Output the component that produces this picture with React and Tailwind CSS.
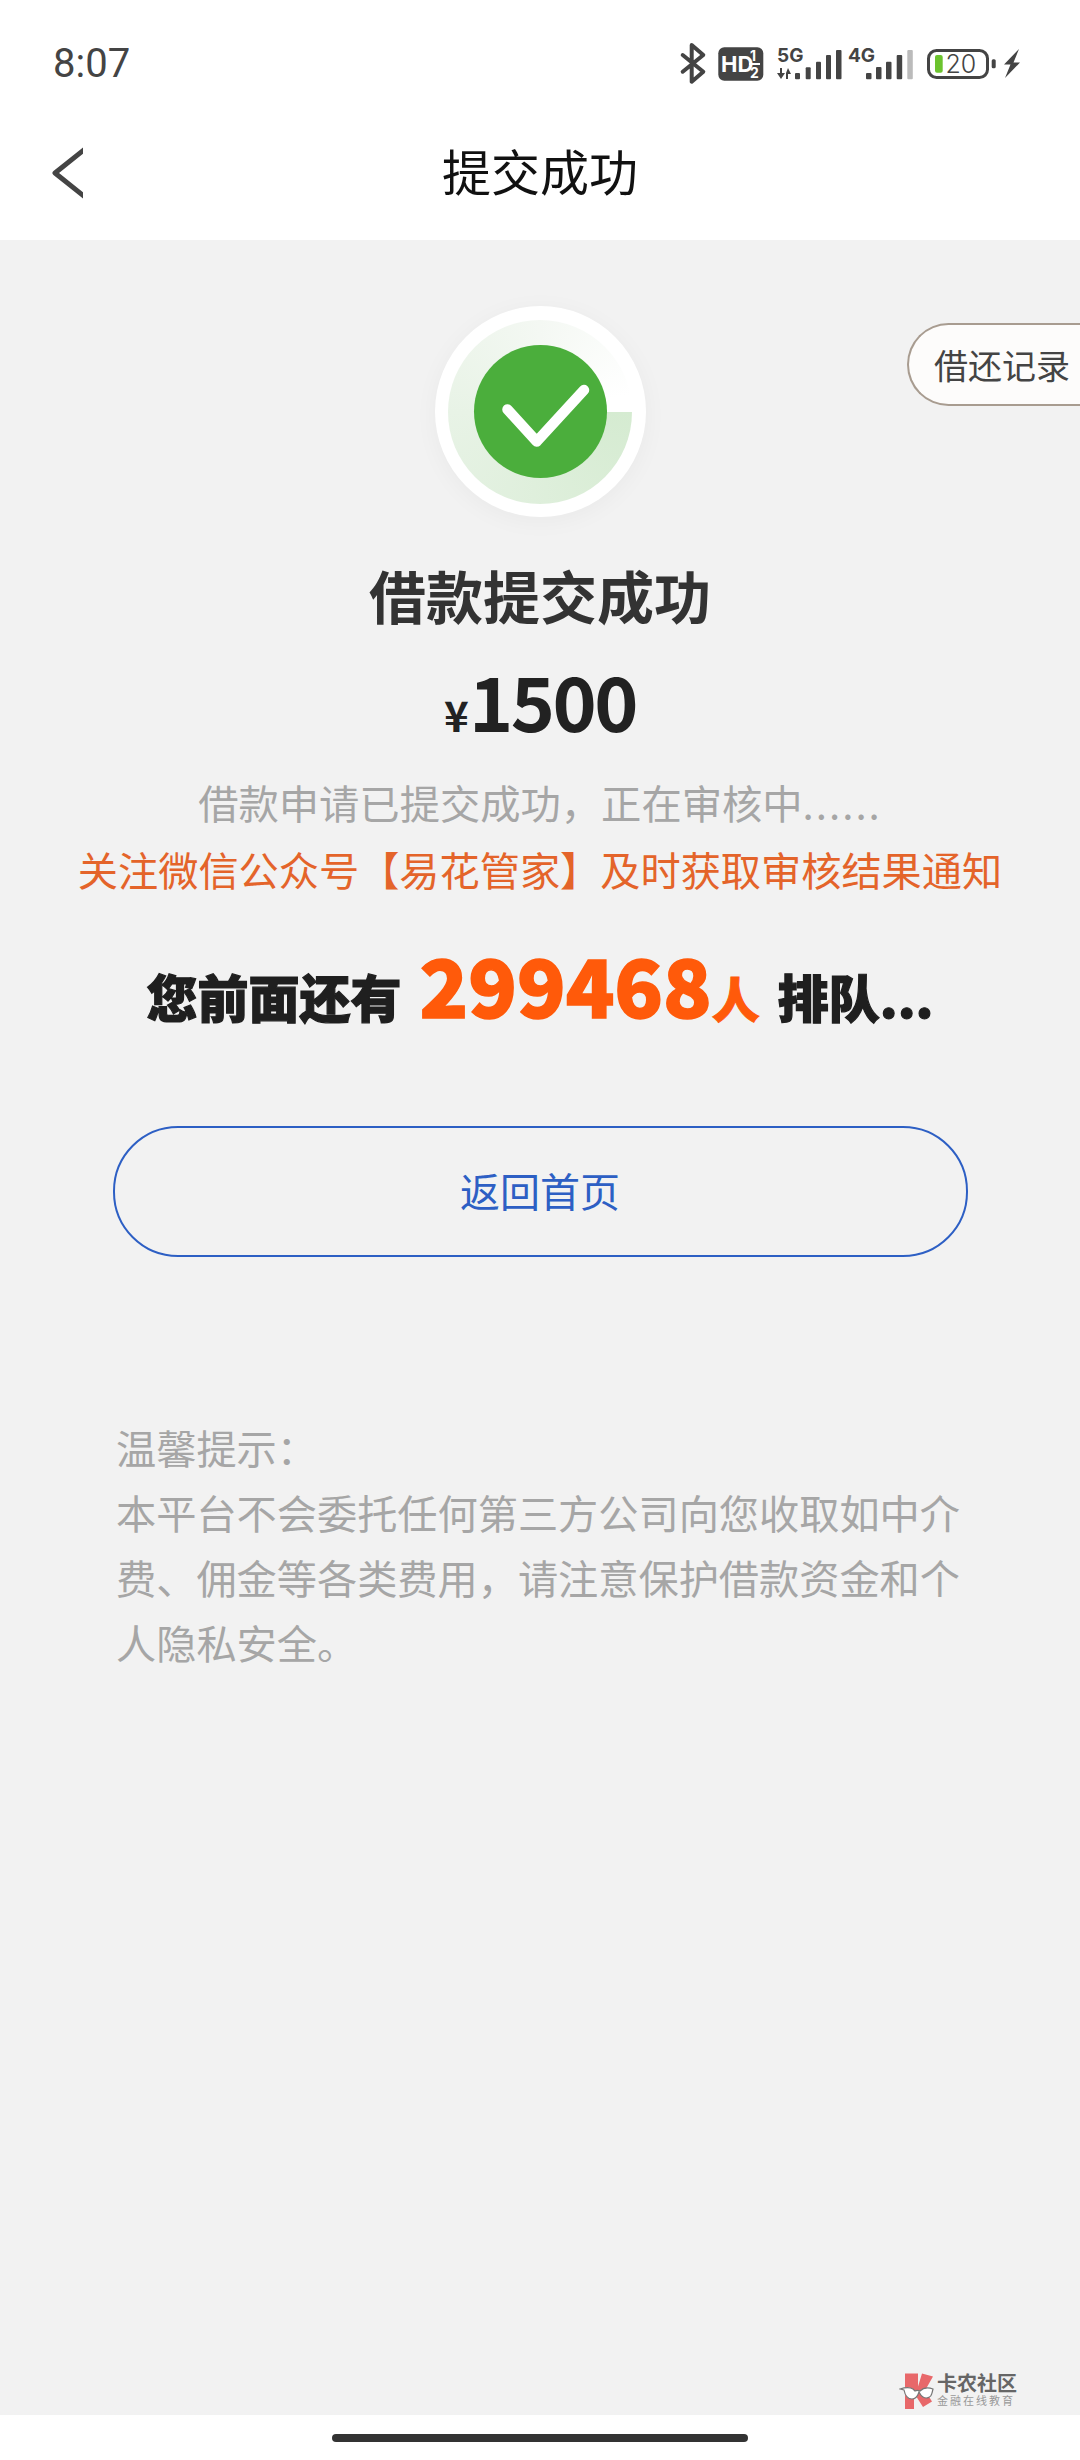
const cjk = { fontFamily: '"Noto Sans CJK SC", "Noto Sans", sans-serif' };

function StatusIcons() {
  return (
    <svg className="mt-[3px]" width="360" height="50" viewBox="0 0 360 50" fill="#444">
      <path d="M12.7 15 33.3 31.7 21.7 41.7V5L33.3 15 12.7 31.7" fill="none" stroke="#444" strokeWidth="4" strokeLinejoin="round" strokeLinecap="round" />
      <rect x="48.3" y="7.3" width="45" height="33.4" rx="6" />
      <text x="51" y="31.5" fill="#fff" fontSize="22" fontWeight="700" fontFamily="Inter">HD</text>
      <text x="80" y="21" fill="#fff" fontSize="14" fontWeight="700" fontFamily="Inter">1</text>
      <text x="80" y="38" fill="#fff" fontSize="14" fontWeight="700" fontFamily="Inter">2</text>
      <rect x="79" y="23" width="11" height="2" fill="#fff" />
      <text x="107" y="22" fontSize="19" fontWeight="700" fontFamily="Inter">5G</text>
      <path d="M107 33h3v-5h2v5h3l-4 6zM116 33l-0 6h2v-5h3l-3-6z" />
      <rect x="125" y="33" width="5" height="6.3" rx="1" />
      <rect x="135.7" y="27.3" width="5" height="12" rx="1" />
      <rect x="146" y="21.7" width="5" height="17.6" rx="1" />
      <rect x="156" y="15" width="5" height="24.3" rx="1" />
      <rect x="166" y="10" width="5.5" height="29.3" rx="1" />
      <text x="178" y="22" fontSize="19" fontWeight="700" fontFamily="Inter">4G</text>
      <rect x="196" y="33" width="5.5" height="6.3" rx="1" />
      <rect x="206" y="27" width="5.5" height="12.3" rx="1" />
      <rect x="216" y="21.7" width="5.5" height="17.6" rx="1" />
      <rect x="226.7" y="15" width="5.5" height="24.3" rx="1" />
      <rect x="237.3" y="10" width="5.5" height="29.3" rx="1" fill="#bbb" />
      <rect x="258.5" y="10.5" width="59" height="27" rx="8" fill="none" stroke="#444" strokeWidth="3" />
      <rect x="265" y="15" width="7.7" height="17.7" rx="2" fill="#6cc32e" />
      <text x="275.5" y="32.7" fontSize="25" fontFamily="Inter" fontWeight="300">20</text>
      <rect x="321.7" y="19.3" width="4" height="9" rx="1.5" />
      <path d="M349 9 334 24.5h6.5L335 38 350 22.5h-6.5z" />
    </svg>
  );
}

function SuccessIcon() {
  return (
    <div className="w-[211px] h-[211px] rounded-full bg-white flex items-center justify-center shadow-[0_4px_24px_rgba(0,0,0,0.04)]">
      <div className="w-[184px] h-[184px] rounded-full flex items-center justify-center bg-[conic-gradient(from_90deg,#d5ebd1,#e8f3e6_50%,#f4f8f3_75%,#ffffff_97%)]">
        <div className="w-[133px] h-[133px] rounded-full bg-[#4bae3c]">
          <svg width="133" height="133" viewBox="0 0 133 133" fill="none">
            <path d="M33.5 64.5 62.7 96.5 110 45" stroke="#fff" strokeWidth="10.5" strokeLinecap="round" strokeLinejoin="round" />
          </svg>
        </div>
      </div>
    </div>
  );
}

function Watermark() {
  return (
    <div className="absolute left-[899px] top-[2370px] flex items-center">
      <svg width="40" height="40" viewBox="0 0 40 40">
        <path d="M6 3.5h13v13L23 3.5l11 3-8 14 7 11-9 5.5-9-14v16H6z" fill="#e8686a" />
        <path d="M1 19c6-2 10-2 13 0l2 2c2-1 3-1 5 0 3-3 8-4 13-2l-1 4c-1 5-6 6-9 4-2-1-3-3-4-5-1 3-2 7-7 7-5 0-7-4-8-9z" fill="#fff" stroke="#777" strokeWidth="1.2" />
      </svg>
      <div className="ml-[-2px] flex flex-col" style={cjk}>
        <span className="text-[20px] leading-[20px] font-bold text-[#666]">卡农社区</span>
        <span className="text-[11px] leading-[14px] text-[#999] tracking-[2px]">金融在线教育</span>
      </div>
    </div>
  );
}

export default function App() {
  return (
    <div className="relative w-[1080px] h-[2460px] overflow-hidden bg-white flex flex-col" style={cjk}>
      <div className="h-[126px] flex items-center justify-between pl-[53px] pr-[50px] shrink-0">
        <span className="mt-[2px] text-[40px] text-[#444] font-['Roboto']">8:07</span>
        <StatusIcons />
      </div>
      <div className="h-[114px] shrink-0 flex items-center justify-center relative">
        <svg className="absolute left-[48px] top-[21px]" width="35" height="52" viewBox="0 0 35 52" fill="none">
          <path d="M37 2 7 26l30 24" stroke="#444" strokeWidth="5" strokeLinecap="round" strokeLinejoin="round" />
        </svg>
        <span className="text-[49px] text-[#111] -mt-[26px]">提交成功</span>
      </div>

      <div className="relative flex-1 bg-[#f2f2f2] flex flex-col items-center pt-[66px]">
        <div className="absolute right-0 top-[83px] w-[173px] h-[83px] rounded-l-[42px] border-2 border-r-0 border-[#a89c90] bg-[#fdfcfb] flex items-center pl-[25px] text-[34px] text-[#444]">
          借还记录
        </div>
        <SuccessIcon />
        <div className="mt-[37px] text-[57px] leading-[80px] font-bold text-[#333]">借款提交成功</div>
        <div className="mt-[21px] flex items-baseline text-[#222] font-bold leading-[90px]">
          <span className="text-[42px]">¥</span>
          <span className="text-[75px] tracking-[-2.5px]">1500</span>
        </div>
        <div className="mt-[13px] text-[40.3px] leading-[60px] text-[#a6a6a6]">借款申请已提交成功，正在审核中<span className="tracking-[2px]">......</span></div>
        <div className="mt-[7px] text-[40.2px] leading-[60px] text-[#e4642a]">关注微信公众号【易花管家】及时获取审核结果通知</div>
        <div className="mt-[34px] flex items-baseline text-[#1f1f1f] font-black leading-[100px]">
          <span className="text-[51px] [-webkit-text-stroke:1.2px_#1f1f1f]">您前面还有</span>
          <span className="ml-[18px] text-[80px] text-[#ff5a0a] [-webkit-text-stroke:1.5px_#ff5a0a]">299468</span>
          <span className="text-[48px] text-[#ff5a0a] [-webkit-text-stroke:1px_#ff5a0a]">人</span>
          <span className="ml-[18px] text-[51px] [-webkit-text-stroke:1.2px_#1f1f1f]">排队...</span>
        </div>
        <div className="mt-[79px] w-[855px] h-[131px] rounded-[65px] border-2 border-[#2d5fc4] flex items-center justify-center pb-[4px] text-[40px] text-[#2d5fc4]">
          返回首页
        </div>
        <div className="mt-[157px] w-[860px] pl-[6px] text-[40.2px] leading-[65px] text-[#a6a6a6]">
          <p>温馨提示：</p>
          <p>本平台不会委托任何第三方公司向您收取如中介费、佣金等各类费用，请注意保护借款资金和个人隐私安全。</p>
        </div>
      </div>

      <div className="h-[45px] shrink-0 flex items-center justify-center">
        <div className="w-[416px] h-[8px] rounded-full bg-[#333]" />
      </div>
      <Watermark />
    </div>
  );
}
